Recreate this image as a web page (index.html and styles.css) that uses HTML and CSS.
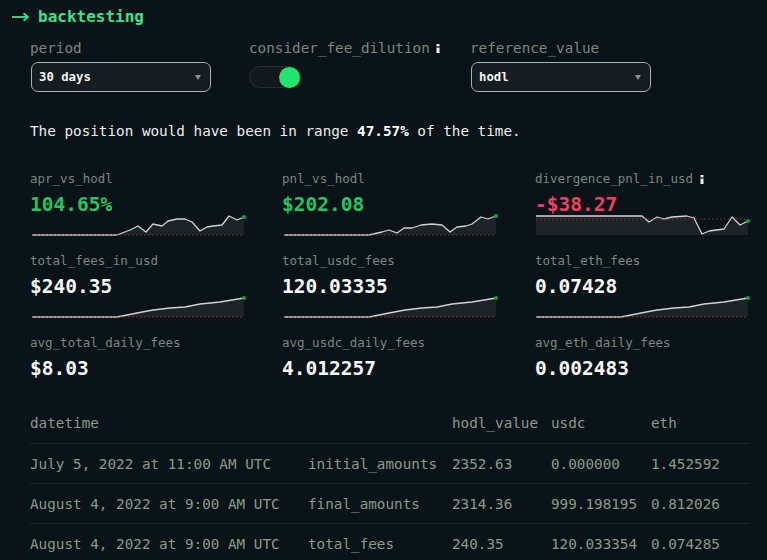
FILE: index.html
```html
<!DOCTYPE html>
<html>
<head>
<meta charset="utf-8">
<link rel="stylesheet" href="styles.css">
</head>
<body>
<div class="page">
  <h1 class="title"><svg class="arrow" width="17" height="10" viewBox="0 0 17 10"><line x1="0" y1="5" x2="16" y2="5"/><polyline points="11.5,1.2 16,5 11.5,8.8"/></svg>backtesting</h1>

  <div class="controls">
    <div class="field">
      <div class="ctl-label">period</div>
      <div class="select"><span>30 days</span><span class="caret"></span></div>
    </div>
    <div class="field">
      <div class="ctl-label">consider_fee_dilution<svg class="info" width="4" height="9" viewBox="0 0 4 9"><rect x="0.5" y="0" width="3" height="2.4"/><rect x="0.5" y="3.6" width="3" height="5.4"/></svg></div>
      <div class="toggle-wrap"><div class="toggle"><span class="knob"></span></div></div>
    </div>
    <div class="field">
      <div class="ctl-label">reference_value</div>
      <div class="select"><span>hodl</span><span class="caret"></span></div>
    </div>
  </div>

  <p class="summary">The position would have been in range <b>47.57%</b> of the time.</p>

  <div class="metrics">
    <div class="metric">
      <div class="m-label">apr_vs_hodl</div>
      <div class="m-value pos">104.65%</div>
      <svg class="spark" width="214" height="25" viewBox="0 0 214 25">
        <polygon class="area" points="1,23 86,23 99,18 107,14 115,20 122,12 131,14 137,9 146,7 154,7 161,10 169,19 176,15 182,14 191,13 198,4 206,8 213,5 213,23"/>
        <polyline class="line" points="1,23 86,23 99,18 107,14 115,20 122,12 131,14 137,9 146,7 154,7 161,10 169,19 176,15 182,14 191,13 198,4 206,8 213,5"/>
        <line class="zero" x1="1" y1="23" x2="213" y2="23"/>
        <circle class="end" cx="213" cy="5" r="2"/>
      </svg>
    </div>
    <div class="metric">
      <div class="m-label">pnl_vs_hodl</div>
      <div class="m-value pos">$202.08</div>
      <svg class="spark" width="214" height="25" viewBox="0 0 214 25">
        <polygon class="area" points="1,23 86,23 99,20 106,18 114,21 121,16 129,16 138,13 149,12 159,13 167,20 174,15 183,14 189,12 198,5 205,7 213,4 213,23"/>
        <polyline class="line" points="1,23 86,23 99,20 106,18 114,21 121,16 129,16 138,13 149,12 159,13 167,20 174,15 183,14 189,12 198,5 205,7 213,4"/>
        <line class="zero" x1="1" y1="23" x2="213" y2="23"/>
        <circle class="end" cx="213" cy="4" r="2"/>
      </svg>
    </div>
    <div class="metric">
      <div class="m-label">divergence_pnl_in_usd<svg class="info" width="4" height="9" viewBox="0 0 4 9"><rect x="0.5" y="0" width="3" height="2.4"/><rect x="0.5" y="3.6" width="3" height="5.4"/></svg></div>
      <div class="m-value neg">-$38.27</div>
      <svg class="spark" width="214" height="25" viewBox="0 0 214 25">
        <polygon class="area" points="0,4 106,4 113,10 121,5 128,7 136,5 151,4 158,6 166,22 173,19 188,17 196,5 204,13 212,9 212,23 0,23"/>
        <polyline class="line" points="0,4 106,4 113,10 121,5 128,7 136,5 151,4 158,6 166,22 173,19 188,17 196,5 204,13 212,9"/>
        <line class="zero" x1="0" y1="7" x2="212" y2="7"/>
        <circle class="end" cx="212" cy="9" r="2"/>
      </svg>
    </div>

    <div class="metric">
      <div class="m-label">total_fees_in_usd</div>
      <div class="m-value">$240.35</div>
      <svg class="spark" width="214" height="25" viewBox="0 0 214 25">
        <polygon class="area" points="1,23 86,23 106,19 122,16 139,14 154,13 169,10 189,8 213,4 213,23"/>
        <polyline class="line" points="1,23 86,23 106,19 122,16 139,14 154,13 169,10 189,8 213,4"/>
        <line class="zero" x1="1" y1="23" x2="213" y2="23"/>
        <circle class="end" cx="213" cy="4" r="2"/>
      </svg>
    </div>
    <div class="metric">
      <div class="m-label">total_usdc_fees</div>
      <div class="m-value">120.03335</div>
      <svg class="spark" width="214" height="25" viewBox="0 0 214 25">
        <polygon class="area" points="1,23 86,23 106,19 122,16 139,14 154,13 169,10 189,8 213,4 213,23"/>
        <polyline class="line" points="1,23 86,23 106,19 122,16 139,14 154,13 169,10 189,8 213,4"/>
        <line class="zero" x1="1" y1="23" x2="213" y2="23"/>
        <circle class="end" cx="213" cy="4" r="2"/>
      </svg>
    </div>
    <div class="metric">
      <div class="m-label">total_eth_fees</div>
      <div class="m-value">0.07428</div>
      <svg class="spark" width="214" height="25" viewBox="0 0 214 25">
        <polygon class="area" points="0,23 85,23 105,19 121,16 138,14 153,13 168,10 188,8 212,4 212,23"/>
        <polyline class="line" points="0,23 85,23 105,19 121,16 138,14 153,13 168,10 188,8 212,4"/>
        <line class="zero" x1="0" y1="23" x2="212" y2="23"/>
        <circle class="end" cx="212" cy="4" r="2"/>
      </svg>
    </div>

    <div class="metric">
      <div class="m-label">avg_total_daily_fees</div>
      <div class="m-value">$8.03</div>
    </div>
    <div class="metric">
      <div class="m-label">avg_usdc_daily_fees</div>
      <div class="m-value">4.012257</div>
    </div>
    <div class="metric">
      <div class="m-label">avg_eth_daily_fees</div>
      <div class="m-value">0.002483</div>
    </div>
  </div>

  <div class="table">
    <div class="row head">
      <span>datetime</span><span></span><span>hodl_value</span><span>usdc</span><span>eth</span>
    </div>
    <div class="row">
      <span>July 5, 2022 at 11:00 AM UTC</span><span>initial_amounts</span><span>2352.63</span><span>0.000000</span><span>1.452592</span>
    </div>
    <div class="row">
      <span>August 4, 2022 at 9:00 AM UTC</span><span>final_amounts</span><span>2314.36</span><span>999.198195</span><span>0.812026</span>
    </div>
    <div class="row">
      <span>August 4, 2022 at 9:00 AM UTC</span><span>total_fees</span><span>240.35</span><span>120.033354</span><span>0.074285</span>
    </div>
  </div>
</div>
</body>
</html>
```

FILE: styles.css
```css
html, body {
  margin: 0;
  padding: 0;
  background: #0a1317;
}
body {
  font-family: "DejaVu Sans Mono", "Liberation Mono", monospace;
  color: #e9ecea;
  width: 767px;
  height: 560px;
  overflow: hidden;
}
.page {
  padding: 0 0 0 30px;
}
.title {
  margin: 0 0 0 -18px;
  font-size: 16px;
  line-height: 34px;
  font-weight: bold;
  color: #3ee08a;
  display: flex;
  align-items: center;
}
.arrow {
  display: block;
  margin-right: 9px;
  fill: none;
  stroke: #3ee08a;
  stroke-width: 1.8;
}
.controls {
  margin-top: 4px;
  display: grid;
  grid-template-columns: 219px 221px 181px;
}
.ctl-label {
  font-size: 14.3px;
  line-height: 20px;
  color: #7b887f;
  display: flex;
  align-items: center;
}
.info {
  fill: #eef0ee;
  margin-left: 6px;
}
.select {
  margin-top: 4px;
  height: 30px;
  box-sizing: border-box;
  border: 1.5px solid #a7b3b1;
  border-radius: 7px;
  background: #151d21;
  display: flex;
  align-items: center;
  justify-content: space-between;
  padding: 0 9px 0 7px;
  font-size: 12.3px;
  font-weight: bold;
  color: #f3f4f3;
  margin-left: 1px;
  width: 180px;
}
.caret {
  width: 0;
  height: 0;
  border-left: 3.5px solid transparent;
  border-right: 3.5px solid transparent;
  border-top: 5px solid #8c9492;
}
.toggle-wrap {
  margin-top: 4px;
  height: 30px;
  display: flex;
  align-items: center;
}
.toggle {
  width: 52px;
  height: 22px;
  box-sizing: border-box;
  border: 1px solid #263034;
  border-radius: 11px;
  background: #11191c;
  display: flex;
  align-items: center;
  justify-content: flex-end;
}
.knob {
  width: 21px;
  height: 21px;
  border-radius: 50%;
  background: #22e56c;
}
.summary {
  margin: 29px 0 0;
  font-size: 14.3px;
  line-height: 20px;
  color: #eceeed;
}
.summary b {
  color: #ffffff;
}
.metrics {
  margin-top: 28px;
  display: grid;
  grid-template-columns: 252px 253px 1fr;
  row-gap: 14px;
}
.m-label {
  font-size: 12.5px;
  line-height: 20px;
  color: #7b887f;
  display: flex;
  align-items: center;
}
.m-label .info {
  margin-left: 7px;
}
.m-value {
  margin-top: 6px;
  font-size: 19.5px;
  line-height: 20px;
  font-weight: bold;
  color: #f6f7f6;
}
.m-value.pos { color: #22c55e; }
.m-value.neg { color: #f43f5e; }
.spark {
  display: block;
  margin-top: -3px;
  margin-left: 1px;
  overflow: visible;
}
.spark .area { fill: #1c2428; }
.spark .line {
  fill: none;
  stroke: #cfd3d2;
  stroke-width: 1.3;
  stroke-linejoin: round;
}
.spark .zero {
  stroke: #a3202f;
  stroke-width: 1.2;
  stroke-dasharray: 1.5 2.5;
}
.spark .end { fill: #15a03c; }
.table {
  margin-top: 24px;
  width: 720px;
  font-size: 14.3px;
  color: #8a9a8c;
}
.row {
  display: grid;
  grid-template-columns: 278px 144px 99px 100px 1fr;
  align-items: center;
  height: 40px;
  box-sizing: border-box;
  border-bottom: 1px solid #1d272a;
  white-space: nowrap;
}
.row.head {
  height: 41px;
}
```
